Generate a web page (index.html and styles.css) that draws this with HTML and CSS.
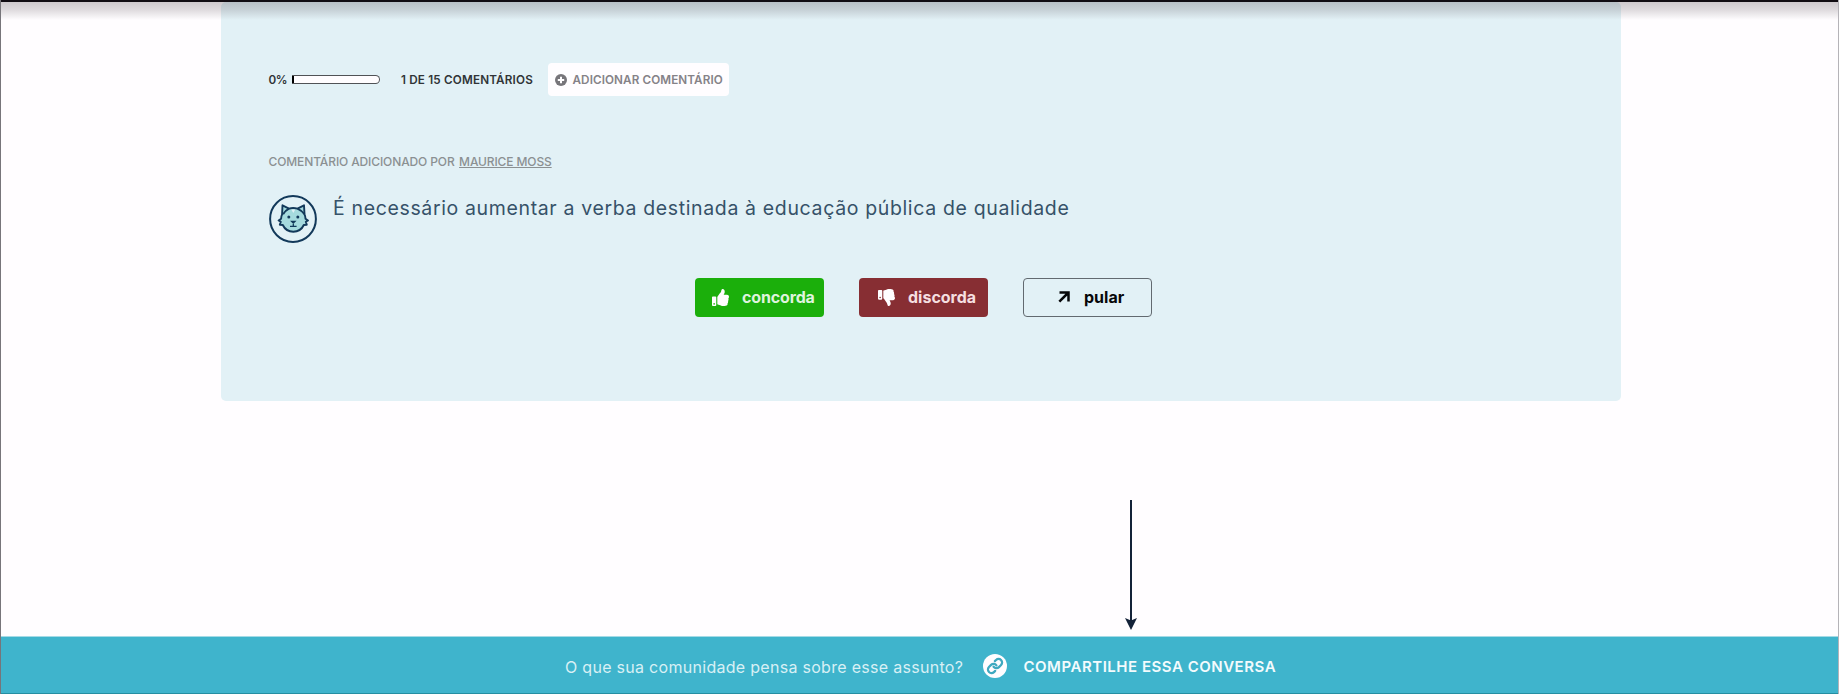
FILE: index.html
```
<!DOCTYPE html>
<html lang="pt-BR">
<head>
<meta charset="utf-8">
<title>Conversa</title>
<link rel="stylesheet" href="styles.css">
</head>
<body>
<div class="page">
  <main class="card">
    <div class="status">
      <span class="percent">0%</span>
      <span class="progress"></span>
      <span class="count">1 DE 15 COMENTÁRIOS</span>
      <button class="add">
        <svg class="add-icon" viewBox="0 0 12 12"><circle cx="6" cy="6" r="6" fill="#77757a"/><path d="M6 2.8v6.4M2.8 6h6.4" stroke="#fffdff" stroke-width="2"/></svg>
        <span class="add-label">ADICIONAR COMENTÁRIO</span>
      </button>
    </div>
    <p class="author"><span>COMENTÁRIO ADICIONADO POR</span> <a class="name">MAURICE MOSS</a></p>
    <div class="comment">
      <svg class="avatar" viewBox="0 0 48 48">
        <circle cx="24" cy="24" r="22.900" fill="none" stroke="#12395a" stroke-width="2"/>
        <g fill="#a5dade" stroke="#12395a" stroke-width="1.900" stroke-linejoin="round">
          <path d="M13.500 10.300l6.500 3.300q4-1.300 8.500 0l6.500-3.300.5 9q1 2 1 4.500l2.500 1.700-2.200 1.300 1 2.900-3 .3c-2 4.300-5.800 6.700-10.500 6.700s-8.500-2.400-10.500-6.700l-3-.3 1-2.900-2.200-1.300 2.500-1.700q0-2.500 1-4.500z"/>
          <path d="M20 13.600q-4 2-5.900 5.700M28.500 13.600q4.500 2 7 5.700" fill="none"/>
        </g>
        <path d="M22.300 14.500h4l-2 3.500z" fill="#e2f1f6"/>
        <circle cx="19.800" cy="22" r="1.500" fill="#12395a"/><circle cx="28.800" cy="22" r="1.500" fill="#12395a"/>
        <path d="M22.600 26.300h3.400l-1.700 1.700zM24.300 27v4M21 31.300h6.600" fill="#12395a" stroke="#12395a" stroke-width="1.300"/>
      </svg>
      <h1 class="title">É necessário aumentar a verba destinada à educação pública de qualidade</h1>
    </div>
    <div class="votes">
      <button class="vote agree">
        <svg class="thumb" viewBox="0 0 512 512"><path fill="#fffdff" fill-rule="evenodd" d="M104 224H24c-13 0-24 11-24 24v240c0 13 11 24 24 24h80c13 0 24-11 24-24V248c0-13-11-24-24-24zM64 472a24 24 0 1 1 0-48a24 24 0 1 1 0 48zM384 81.500c0 42.400-26 66.200-33.300 94.500h101.700c33.400 0 59.400 27.700 59.600 58.100.1 17.900-7.500 37.200-19.400 49.200 9.800 23.300 8.200 56-9.300 79.500 8.700 25.900 0 57.700-16.400 74.800 4.300 17.600 2.200 32.600-6.100 44.600C440.200 511.600 389.600 512 346.800 512h-2.800c-48.300 0-87.800-17.600-119.600-31.700-16-7.100-36.800-15.900-52.700-16.200-6.500-.1-11.800-5.500-11.800-12V238.300c0-3.200 1.300-6.300 3.600-8.500 39.600-39.100 56.600-80.600 89.100-113.100 14.800-14.800 20.200-37.200 25.400-58.900C282.500 39.300 291.800 0 312 0c24 0 72 8 72 81.500z"/></svg>
        <span class="agree-label">concorda</span>
      </button>
      <button class="vote disagree">
        <svg class="thumb" viewBox="0 0 512 512"><path fill="#fffdff" d="M0 56v240c0 13.300 10.700 24 24 24h80c13.300 0 24-10.700 24-24V56c0-13.300-10.700-24-24-24H24C10.700 32 0 42.700 0 56zM312 512c-20.200 0-29.500-39.300-33.900-57.800-5.200-21.700-10.600-44.100-25.400-58.900-32.500-32.500-49.500-74-89.100-113.100a12 12 0 0 1-3.600-8.500V59.900c0-6.500 5.200-11.900 11.800-12 15.800-.3 36.600-9.100 52.600-16.200C256.200 17.600 295.700 0 344 0h2.800c42.800 0 93.400.4 113.800 29.700 8.400 12.100 10.400 27 6.100 44.600 16.300 17.100 25.100 48.900 16.400 74.800 17.500 23.400 19.100 56.100 9.300 79.500 11.900 11.900 19.500 31.300 19.400 49.200-.2 30.400-26.200 58.100-59.600 58.100H350.700C358 364.200 384 388.100 384 430.500 384 504 336 512 312 512z"/><circle cx="64" cy="256" r="24" fill="#872e33"/></svg>
        <span class="disagree-label">discorda</span>
      </button>
      <button class="vote skip">
        <svg class="skip-icon" viewBox="0 0 12 12"><path d="M1.500 1.500h9v9M10.500 1.500L1.300 10.700" fill="none" stroke="#07080a" stroke-width="2.500"/></svg>
        <span class="skip-label">pular</span>
      </button>
    </div>
  </main>
  <svg class="arrow" viewBox="0 0 14 130"><path d="M7 0v122" stroke="#132238" stroke-width="2"/><path d="M1 118l6 2.500 6-2.500-6 12z" fill="#132238"/></svg>
  <footer class="share">
    <span class="question">O que sua comunidade pensa sobre esse assunto?</span>
    <svg class="link" viewBox="0 0 24 24"><circle cx="12" cy="12" r="12" fill="#fffdff"/><g fill="none" stroke="#3fa9c0" stroke-linecap="round" stroke-linejoin="round" transform="translate(3.500 3.500) scale(.71)"><path stroke-width="3.200" d="M10 13a5 5 0 0 0 7.540.54l3-3a5 5 0 0 0-7.070-7.070l-1.720 1.710"/><path stroke-width="3.200" d="M14 11a5 5 0 0 0-7.540-.54l-3 3a5 5 0 0 0 7.070 7.070l1.710-1.710"/></g></svg>
    <a class="share-label">COMPARTILHE ESSA CONVERSA</a>
  </footer>
</div>
</body>
</html>
```
FILE: styles.css
```
* { box-sizing: border-box; }
body { margin: 0; font-family: Inter, "Noto Sans", sans-serif; background: #fffdff; white-space: nowrap; }
button { font: inherit; border: 0; padding: 0; margin: 0; }
.page { position: relative; display: flex; flex-direction: column; height: 694px; padding-top: 2px; overflow: hidden; border-left: 1px solid #77757a; border-right: 1px solid #b5b3b8; }
.page::before { content: ""; position: absolute; left: -1px; right: -1px; top: 0; height: 18px; border-top: 2px solid #110c12; background: linear-gradient(rgba(50,35,45,.24), rgba(50,35,45,.17) 40%, rgba(50,35,45,0)); }
.card { width: 1400px; height: 399px; margin-left: 219.5px; padding: 61px 48px 0; border-radius: 5px; background: #e2f1f6; }
.status { display: flex; align-items: center; height: 33px; font-size: 11.700px; font-weight: 600; color: #303437; }
.percent { width: 23.500px; letter-spacing: -.4px; }
.progress { width: 88px; height: 9px; margin-right: 21px; border: 1.5px solid #505256; border-left: 2px solid #000; border-radius: 1px 5px 5px 1px; background: #fffdff; }
.count { width: 147px; letter-spacing: .18px; }
.add { display: flex; align-items: center; width: 181px; height: 33px; padding-left: 6.500px; border-radius: 4px; background: #fffdff; color: #858287; }
.add-icon { width: 12px; height: 12px; margin-right: 6px; }
.add-label { letter-spacing: .1px; }
.author { display: flex; gap: 4.500px; margin: 56px 0 0; height: 20px; line-height: 20px; font-size: 12px; font-weight: 500; letter-spacing: -.12px; color: #8b9092; }
.name { text-decoration: underline; text-underline-offset: 1px; }
.comment { display: flex; gap: 16.500px; margin-top: 23px; height: 48px; }
.avatar { width: 48px; height: 48px; }
.title { margin: 1px 0 0; font-size: 19.500px; font-weight: 400; line-height: 24px; letter-spacing: .64px; color: #365269; }
.votes { display: flex; gap: 35px; margin: 34.500px 0 0 426.500px; }
.vote { display: flex; align-items: center; width: 129px; height: 39px; border-radius: 4px; font-size: 16px; font-weight: 700; }
.agree { background: #1baf0b; color: #dff4dd; padding-left: 17px; letter-spacing: -.15px; }
.disagree { background: #872e33; color: #f5dfe0; padding-left: 19px; }
.skip { background: none; border: 1.500px solid #626a70; color: #07080a; padding-left: 34px; }
.thumb { width: 17px; height: 17px; margin-right: 13px; }
.skip-icon { width: 12px; height: 12px; margin-right: 14px; }
.arrow { width: 14px; height: 130px; margin: 99px 0 0 1122.500px; }
.share { display: flex; align-items: center; height: 58px; margin: auto -1px 0; padding: 3px 0 0 565px; border-top: 1px solid #a5dae6; border-bottom: 1px solid #258fa2; background: #3fb4cc; font-size: 15px; color: #d8f0f5; }
.question { width: 399px; font-size: 16px; letter-spacing: .29px; }
.link { width: 24px; height: 24px; margin: 0 16.500px 1px 19px; }
.share-label { font-weight: 600; letter-spacing: .52px; color: #f3fbfd; }
```
